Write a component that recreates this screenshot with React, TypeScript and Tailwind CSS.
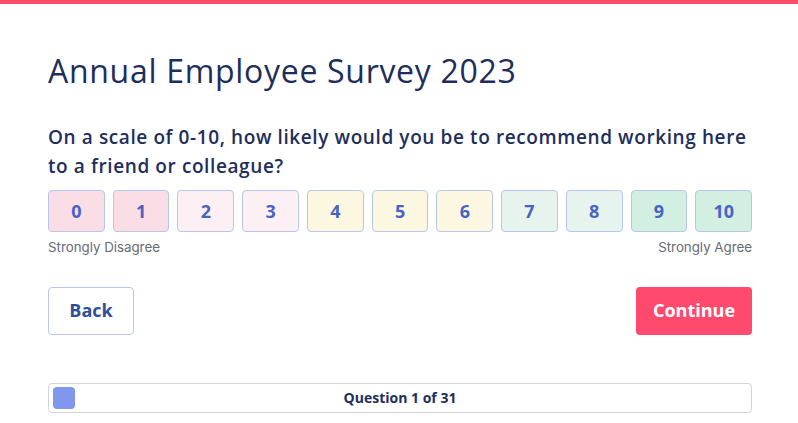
const scale = [
  { n: 0, bg: 'bg-[#fbdde6]' },
  { n: 1, bg: 'bg-[#fbdde6]' },
  { n: 2, bg: 'bg-[#fdf0f4]' },
  { n: 3, bg: 'bg-[#fdf0f4]' },
  { n: 4, bg: 'bg-[#fcf7e1]' },
  { n: 5, bg: 'bg-[#fcf7e1]' },
  { n: 6, bg: 'bg-[#fcf7e1]' },
  { n: 7, bg: 'bg-[#e7f4ee]' },
  { n: 8, bg: 'bg-[#e7f4ee]' },
  { n: 9, bg: 'bg-[#d2efe1]' },
  { n: 10, bg: 'bg-[#d2efe1]' },
];

export default function App() {
  return (
    <div className="min-h-screen bg-white font-['Open_Sans',sans-serif]">
      <div className="h-1 bg-[#ff4a6e]" />

      <div className="pl-12 pr-[46px] pt-[46px]">
        <h1 className="text-[32px] leading-[42px] text-[#1e2e5c] tracking-[0.7px]">
          Annual Employee Survey 2023
        </h1>

        <p className="mt-[31px] text-[19px] leading-[29px] font-semibold text-[#1e2e5c] tracking-[0.6px]">
          On a scale of 0-10, how likely would you be to recommend working here to a friend or colleague?
        </p>

        {/* Scale */}
        <div className="mt-[9px] flex gap-2">
          {scale.map((s) => (
            <button
              key={s.n}
              className={`flex-1 h-[42px] rounded border border-[#b7c6ea] ${s.bg} text-[18px] font-bold text-[#4864c3]`}
            >
              {s.n}
            </button>
          ))}
        </div>
        <div className="mt-[6px] flex justify-between font-['Inter',sans-serif] text-[13.3px] text-[#666a76]">
          <span>Strongly Disagree</span>
          <span>Strongly Agree</span>
        </div>

        {/* Actions */}
        <div className="mt-[29px] flex justify-between">
          <button className="w-[86px] h-[48px] rounded border border-[#b7c6ea] bg-white text-[18px] font-bold text-[#2f4f9b]">
            Back
          </button>
          <button className="w-[116px] h-[48px] rounded bg-[#ff4a6e] text-[18px] font-bold text-white">
            Continue
          </button>
        </div>

        {/* Progress */}
        <div className="mt-[48px] relative h-[30px] rounded border border-[#d3d4e2] flex items-center justify-center">
          <div className="absolute left-[4px] top-[3px] w-[22px] h-[22px] rounded-sm bg-[#8197ee]" />
          <span className="text-[14px] font-bold text-[#1e2e5c]">Question 1 of 31</span>
        </div>
      </div>
    </div>
  );
}
